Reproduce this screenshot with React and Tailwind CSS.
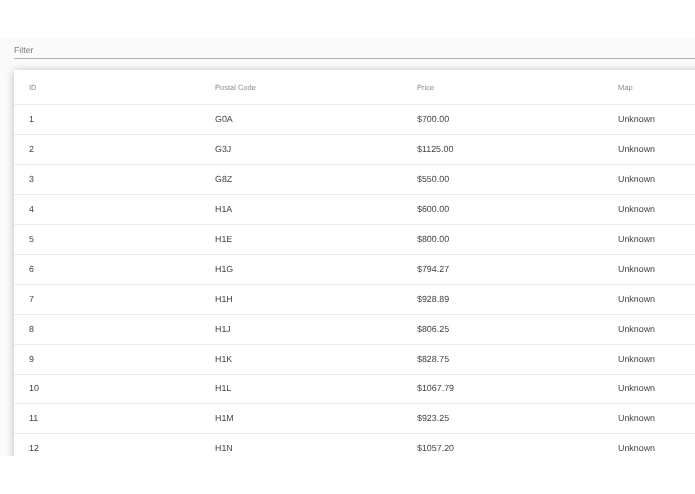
const rows = [
  ["1", "G0A", "$700.00"],
  ["2", "G3J", "$1125.00"],
  ["3", "G8Z", "$550.00"],
  ["4", "H1A", "$600.00"],
  ["5", "H1E", "$800.00"],
  ["6", "H1G", "$794.27"],
  ["7", "H1H", "$928.89"],
  ["8", "H1J", "$806.25"],
  ["9", "H1K", "$828.75"],
  ["10", "H1L", "$1067.79"],
  ["11", "H1M", "$923.25"],
  ["12", "H1N", "$1057.20"],
];

export default function App() {
  return (
    <div className="h-[494px] w-[695px] overflow-hidden bg-white font-['Liberation_Sans',sans-serif] [text-rendering:geometricPrecision]">
      <div className="h-[39px]"></div>
      <div className="h-[417px] overflow-hidden bg-[#fafafa] pl-[14px]">
        <div className="flex h-5 items-center border-b border-[#b5b5b5] pt-[5px] text-[8.8px] text-[#808080] [will-change:transform]">Filter</div>
        <div className="mt-[11px] w-[720px] bg-white shadow-[0_1px_8px_rgba(0,0,0,0.25)]">
          <div className="grid h-[35px] grid-cols-[186px_202px_201px_1fr] items-center border-b border-[#ececec] pt-px text-[7.5px] text-[#8c8c8c] [will-change:transform]">
            <div className="pl-[15px]">ID</div>
            <div className="pl-[15px]">Postal Code</div>
            <div className="pl-[15px]">Price</div>
            <div className="pl-[15px]">Map</div>
          </div>
          {rows.map((r) => (
            <div key={r[0]} className="grid h-[29.95px] grid-cols-[186px_202px_201px_1fr] items-center border-b border-[#ececec] pt-px text-[8.9px] text-[#444444] [will-change:transform]">
              <div className="pl-[15px]">{r[0]}</div>
              <div className="pl-[15px]">{r[1]}</div>
              <div className="pl-[15px]">{r[2]}</div>
              <div className="pl-[15px]">Unknown</div>
            </div>
          ))}
        </div>
      </div>
    </div>
  );
}
